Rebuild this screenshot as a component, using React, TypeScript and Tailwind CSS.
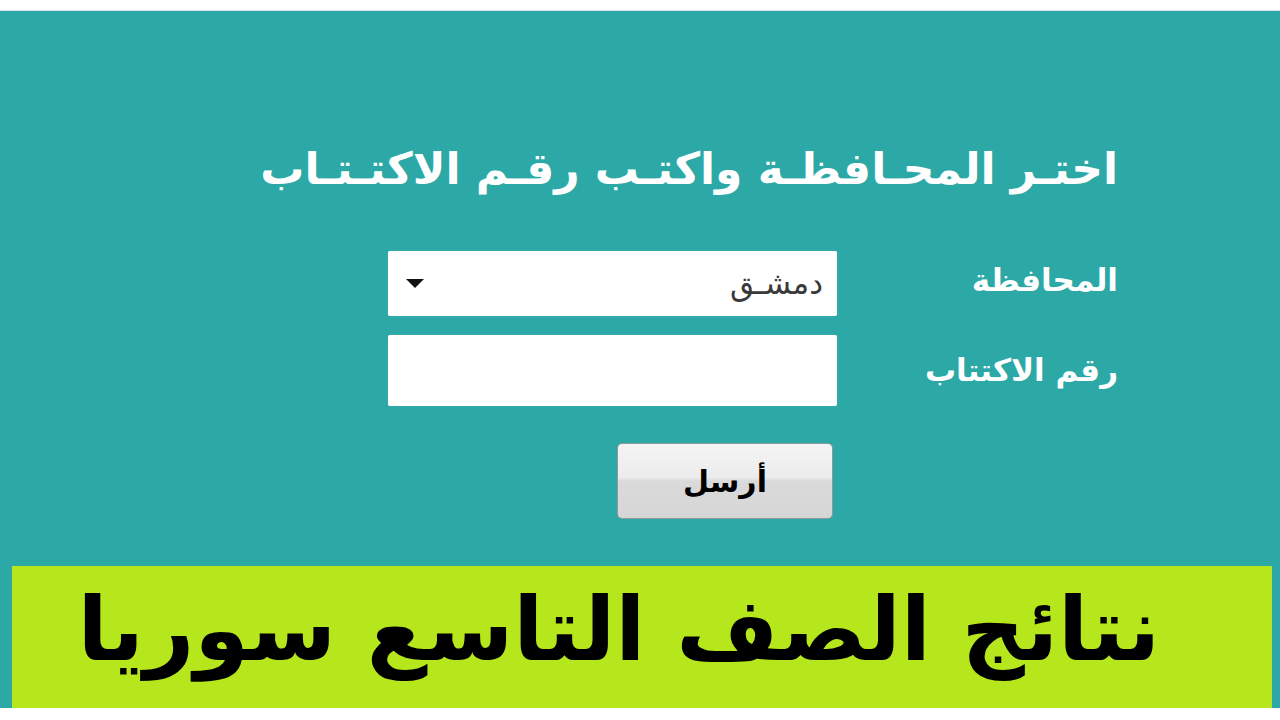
export default function App() {
  return (
    <div className="w-[1280px] h-[720px] bg-white overflow-hidden font-['DejaVu_Sans',sans-serif]">
      <div className="mt-[10px] h-[698px] bg-[#2ca9a7] border-t border-[#d8e6e6] flex flex-col" dir="rtl">
        <div className="pr-[162px] pt-[126px]">
          <h1 className="text-white font-bold text-[44px] leading-[64px]">
            اختـر المحـافظـة واكتـب رقـم الاكتـتـاب
          </h1>
          <div className="mt-[50px] flex flex-col gap-[19px]">
            <div className="flex items-center">
              <label className="w-[281px] text-white font-bold text-[31px] leading-none -mt-[6px]">المحافظة</label>
              <div className="w-[449px] h-[65px] bg-white rounded-[2px] flex items-center justify-between pr-[14px] pl-[18px] shadow-[0_0_1px_#9bb]">
                <span className="text-[#3a3a3a] text-[31px] leading-none">دمشـق</span>
                <svg width="18" height="9" viewBox="0 0 18 9">
                  <path d="M0 0 L18 0 L9 9 Z" fill="#111" />
                </svg>
              </div>
            </div>
            <div className="flex items-center">
              <label className="w-[281px] text-white font-bold text-[31px] leading-none">رقم الاكتتاب</label>
              <input className="w-[449px] h-[71px] bg-white rounded-[2px] outline-none shadow-[0_0_1px_#9bb]" />
            </div>
          </div>
          <div className="mt-[37px] mr-[285px]">
            <button className="w-[216px] h-[76px] rounded-[5px] border border-[#8e9a9a] bg-[linear-gradient(#f4f4f4_0%,#ececec_45%,#dadada_50%,#d6d6d6_100%)] text-black text-[30px] font-bold">
              أرسل
            </button>
          </div>
        </div>
        <div className="mt-auto ml-[12px] mr-[8px] h-[142px] bg-[#b6e61c] overflow-hidden flex justify-start pr-[112px]">
          <span className="text-black font-bold text-[88px] leading-[128px]">
            نتائج الصف التاسع سوريا
          </span>
        </div>
      </div>
    </div>
  );
}
